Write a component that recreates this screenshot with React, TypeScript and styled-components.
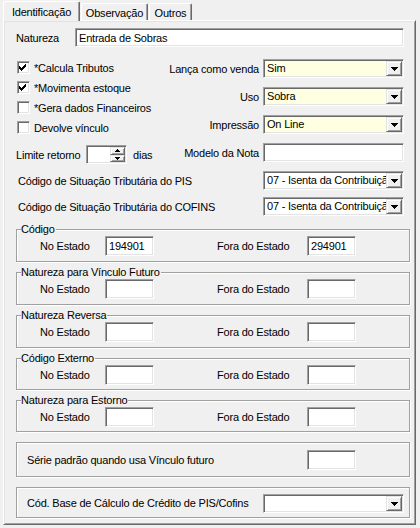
import styled, { createGlobalStyle, css } from 'styled-components';

const GlobalStyle = createGlobalStyle`
	html, body {
		margin: 0;
		background: #f0f0f0;
	}
	body {
		font-family: 'Liberation Sans', Arial, sans-serif;
		font-size: 11px;
		letter-spacing: -0.2px;
		color: #000;
	}
`;

const sunken = css`
	box-sizing: border-box;
	border: 1px solid;
	border-color: #a0a0a0 #ffffff #ffffff #a0a0a0;
	box-shadow: inset 1px 1px 0 #696969, inset -1px -1px 0 #e3e3e3;
`;

const raised = css`
	box-sizing: border-box;
	border: 1px solid;
	border-color: #e3e3e3 #696969 #696969 #e3e3e3;
	box-shadow: inset 1px 1px 0 #ffffff, inset -1px -1px 0 #a0a0a0;
	background: #f0f0f0;
`;

const groups = [
	{ title: 'Código', h: 33, inside: '194901', outside: '294901' },
	{ title: 'Natureza para Vínculo Futuro', h: 33, inside: '', outside: '' },
	{ title: 'Natureza Reversa', h: 33, inside: '', outside: '' },
	{ title: 'Código Externo', h: 32, inside: '', outside: '' },
	{ title: 'Natureza para Estorno', h: 32, inside: '', outside: '' },
];

const checks = [
	['*Calcula Tributos', true],
	['*Movimenta estoque', true],
	['*Gera dados Financeiros', false],
	['Devolve vínculo', false],
] as const;

function DownArrow() {
	return (
		<svg width="7" height="4" shapeRendering="crispEdges">
			<path d="M0 0h7v1h-7z M1 1h5v1h-5z M2 2h3v1h-3z M3 3h1v1h-1z" fill="#000" />
		</svg>
	);
}

function Combo({ value, $yellow }: { value: string; $yellow?: boolean }) {
	return (
		<ComboBox $yellow={$yellow}>
			<ComboText>{value}</ComboText>
			<DropButton>
				<DownArrow />
			</DropButton>
		</ComboBox>
	);
}

function Check({ label, checked }: { label: string; checked: boolean }) {
	return (
		<CheckRow>
			<CheckBox>
				{checked && (
					<svg width="9" height="9" viewBox="0 0 9 9" shapeRendering="crispEdges">
						<path d="M0 2h1v3h-1z M1 3h1v3h-1z M2 4h1v3h-1z M3 3h1v3h-1z M4 2h1v3h-1z M5 1h1v3h-1z M6 0h1v3h-1z" fill="#000" />
					</svg>
				)}
			</CheckBox>
			<span>{label}</span>
		</CheckRow>
	);
}

export default function App() {
	return (
		<Window>
			<GlobalStyle />
			<TabStrip>
				<Tab $active $w={77}>Identificação</Tab>
				<Tab $w={67}>Observação</Tab>
				<Tab $w={43}>Outros</Tab>
			</TabStrip>
			<Panel>
				<TopArea>
					<FieldRow>
						<FieldLabel $w={59}>Natureza</FieldLabel>
						<TextBox $grow>Entrada de Sobras</TextBox>
					</FieldRow>
					<TopBlock>
						<LeftCol>
							{checks.map(([label, checked]) => (
								<Check key={label} label={label} checked={checked} />
							))}
							<SpinRow>
								<FieldLabel $w={70}>Limite retorno</FieldLabel>
								<Spin>
									<SpinField />
									<SpinButtons>
										<SpinButton>
											<svg width="5" height="3" shapeRendering="crispEdges">
												<path d="M2 0h1v1h-1z M1 1h3v1h-3z M0 2h5v1h-5z" fill="#000" />
											</svg>
										</SpinButton>
										<SpinButton>
											<svg width="5" height="3" shapeRendering="crispEdges">
												<path d="M0 0h5v1h-5z M1 1h3v1h-3z M2 2h1v1h-1z" fill="#000" />
											</svg>
										</SpinButton>
									</SpinButtons>
								</Spin>
								<Unit>dias</Unit>
							</SpinRow>
						</LeftCol>
						<RightCol>
							<RightLabel>Lança como venda</RightLabel>
							<Combo value="Sim" $yellow />
							<RightLabel>Uso</RightLabel>
							<Combo value="Sobra" $yellow />
							<RightLabel>Impressão</RightLabel>
							<Combo value="On Line" $yellow />
							<RightLabel>Modelo da Nota</RightLabel>
							<TextBox />
						</RightCol>
					</TopBlock>
					<ComboRow $mt={7}>
						<span>Código de Situação Tributária do PIS</span>
						<Combo value="07 - Isenta da Contribuição" />
					</ComboRow>
					<ComboRow $mt={7}>
						<span>Código de Situação Tributária do COFINS</span>
						<Combo value="07 - Isenta da Contribuição" />
					</ComboRow>
				</TopArea>
				<Groups>
					{groups.map((g) => (
						<Group key={g.title} $h={g.h}>
							<GroupTitle>{g.title}</GroupTitle>
							<GroupGrid>
								<span>No Estado</span>
								<CodeBox>{g.inside}</CodeBox>
								<span />
								<span>Fora do Estado</span>
								<CodeBox>{g.outside}</CodeBox>
							</GroupGrid>
						</Group>
					))}
					<Group $h={35}>
						<LineGroup $pr={53}>
							<span>Série padrão quando usa Vínculo futuro</span>
							<CodeBox />
						</LineGroup>
					</Group>
					<Group $h={31}>
						<LineGroup $pr={5}>
							<span>Cód. Base de Cálculo de Crédito de PIS/Cofins</span>
							<Combo value="" />
						</LineGroup>
					</Group>
				</Groups>
			</Panel>
		</Window>
	);
}

const Window = styled.div({
	boxSizing: 'border-box',
	width: '420px',
	height: '528px',
	padding: '1px 4px 3px 3px',
	display: 'flex',
	flexDirection: 'column',
	background: '#f0f0f0',
});

const TabStrip = styled.div({
	display: 'flex',
	alignItems: 'flex-end',
	height: '19px',
	position: 'relative',
	zIndex: 2,
});

const Tab = styled.div<{ $active?: boolean; $w: number }>`
	box-sizing: border-box;
	width: ${(p) => p.$w}px;
	height: ${(p) => (p.$active ? 20 : 17)}px;
	margin-bottom: ${(p) => (p.$active ? -1 : 0)}px;
	margin-left: ${(p) => (p.$active ? 0 : 1)}px;
	display: flex;
	align-items: center;
	justify-content: center;
	padding-top: ${(p) => (p.$active ? 0 : 1)}px;
	border: 1px solid;
	border-bottom: none;
	border-color: #ffffff #696969 transparent #ffffff;
	border-radius: 2px 2px 0 0;
	box-shadow: inset -1px 0 0 #a0a0a0;
	background: #f0f0f0;
	white-space: nowrap;
`;

const Panel = styled.div`
	flex: 1;
	box-sizing: border-box;
	display: flex;
	flex-direction: column;
	padding: 7px 5px 0 12px;
	border: 1px solid;
	border-color: #ffffff #696969 #696969 #ffffff;
	box-shadow: inset 1px 1px 0 #e3e3e3, inset -1px -1px 0 #a0a0a0;
`;

const TopArea = styled.div({
	display: 'flex',
	flexDirection: 'column',
	paddingRight: '6px',
});

const FieldRow = styled.div({
	display: 'flex',
	alignItems: 'center',
	height: '19px',
});

const FieldLabel = styled.span<{ $w: number }>`
	width: ${(p) => p.$w}px;
	flex-shrink: 0;
`;

const TextBox = styled.div<{ $grow?: boolean }>`
	${sunken};
	height: 19px;
	${(p) => p.$grow && 'flex: 1;'}
	padding: 0 3px;
	display: flex;
	align-items: center;
	background: #ffffff;
	white-space: nowrap;
`;

const TopBlock = styled.div({
	display: 'flex',
	marginTop: '12px',
});

const LeftCol = styled.div({
	flex: 1,
	display: 'flex',
	flexDirection: 'column',
	gap: '7px',
	paddingTop: '2px',
});

const CheckRow = styled.div({
	display: 'flex',
	alignItems: 'center',
	height: '13px',
	paddingLeft: '1px',
	gap: '4px',
	whiteSpace: 'nowrap',
});

const CheckBox = styled.div`
	${sunken};
	width: 13px;
	height: 13px;
	background: #ffffff;
	display: flex;
	align-items: center;
	justify-content: center;
	padding-top: 1px;
`;

const SpinRow = styled.div({
	display: 'flex',
	alignItems: 'center',
	height: '19px',
	marginTop: '4px',
});

const Spin = styled.div`
	${sunken};
	width: 41px;
	height: 19px;
	display: flex;
	padding: 1px;
	background: #ffffff;
`;

const SpinField = styled.div({
	flex: 1,
});

const SpinButtons = styled.div({
	width: '15px',
	display: 'flex',
	flexDirection: 'column',
});

const SpinButton = styled.div`
	${raised};
	flex: 1;
	display: flex;
	align-items: center;
	justify-content: center;
`;

const Unit = styled.span({
	marginLeft: '6px',
});

const RightCol = styled.div({
	width: '240px',
	display: 'grid',
	gridTemplateColumns: '1fr 141px',
	gridAutoRows: '19px',
	columnGap: '4px',
	rowGap: '9px',
	alignItems: 'center',
});

const RightLabel = styled.span({
	textAlign: 'right',
	whiteSpace: 'nowrap',
});

const ComboBox = styled.div<{ $yellow?: boolean }>`
	${sunken};
	width: 141px;
	height: 19px;
	display: flex;
	padding: 1px;
	background: ${(p) => (p.$yellow ? '#ffffe1' : '#ffffff')};
`;

const ComboText = styled.div({
	flex: 1,
	minWidth: 0,
	overflow: 'hidden',
	whiteSpace: 'nowrap',
	paddingLeft: '2px',
	lineHeight: '15px',
});

const DropButton = styled.div`
	${raised};
	width: 16px;
	display: flex;
	align-items: center;
	justify-content: center;
	padding-top: 1px;
`;

const ComboRow = styled.div<{ $mt: number }>`
	display: flex;
	align-items: center;
	justify-content: space-between;
	height: 19px;
	margin-top: ${(p) => p.$mt}px;
	padding-left: 2px;
`;

const Groups = styled.div({
	display: 'flex',
	flexDirection: 'column',
	gap: '10px',
	marginTop: '13px',
});

const Group = styled.div<{ $h: number }>`
	position: relative;
	box-sizing: border-box;
	height: ${(p) => p.$h}px;
	border: 1px solid #a0a0a0;
	box-shadow: inset 1px 1px 0 #ffffff, 1px 1px 0 #ffffff;
`;

const GroupTitle = styled.span({
	position: 'absolute',
	top: '-7px',
	left: '4px',
	padding: '0 1px 0 0',
	lineHeight: '13px',
	background: '#f0f0f0',
	whiteSpace: 'nowrap',
});

const GroupGrid = styled.div({
	height: '100%',
	display: 'grid',
	gridTemplateColumns: '65px 49px 63px 90px 49px',
	alignItems: 'center',
	paddingLeft: '23px',
	paddingTop: '1px',
	boxSizing: 'border-box',
});

const CodeBox = styled.div`
	${sunken};
	width: 49px;
	height: 20px;
	padding: 0 3px;
	display: flex;
	align-items: center;
	background: #ffffff;
`;

const LineGroup = styled.div<{ $pr: number }>`
	height: 100%;
	box-sizing: border-box;
	display: flex;
	align-items: center;
	justify-content: space-between;
	padding: 1px ${(p) => p.$pr}px 0 10px;
`;
